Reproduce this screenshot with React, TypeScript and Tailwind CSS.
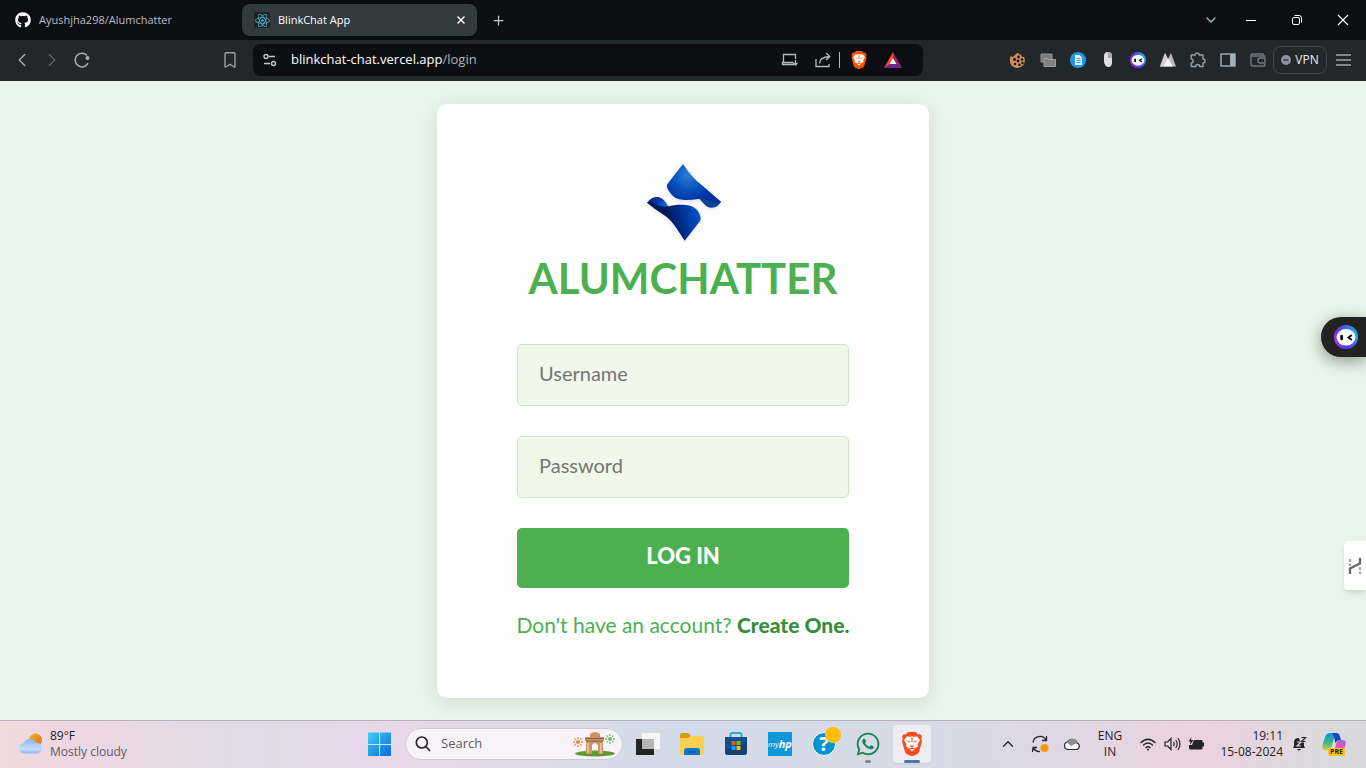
import type { ReactNode } from "react";
import { FaGithub, FaReact, FaWhatsapp } from "react-icons/fa";
import { ChevronDown, ChevronLeft, ChevronRight, ChevronUp, Plus, X } from "lucide-react";

function IconButton({ label, className = "w-[30px]", children }: { label: string; className?: string; children: ReactNode }) {
  return (
    <button type="button" aria-label={label} className={`flex h-8 shrink-0 items-center justify-center ${className}`}>
      {children}
    </button>
  );
}

function BraveLion({ size, color = "#fb4a20" }: { size: number; color?: string }) {
  return (
    <svg width={size} height={size} viewBox="0 0 24 24" aria-hidden="true">
      <path d="M8 0h8l2.200 2.400 2-.3L22 4.800l-.8 2.200.8 2.200-3 10.800q-.4 1.200-1.500 2L13 24q-1 .500-2 0l-4.500-2q-1.100-.8-1.500-2L2 9.200 2.800 7 2 4.800l1.800-2.700 2 .3z" fill={color} />
      <path d="M7 4.200l2.500.5 2.500-.3 2.500.3 2.500-.5 3 4-2.500 4 .6 2.300-3 1.700L12 19.500l-3.100-3.300-3-1.700.6-2.300L4 8.200z" fill="#fff" />
      <path d="M6.500 8.500l3.700.8-.7 1.500zM17.500 8.500l-3.700.8.7 1.500zM10 12.800l2 1.200 2-1.200-.6 2.200h-2.800zM11.300 5.500h1.400l-.3 5h-.8zM8.500 16.500l3.500-1 3.500 1-3.500.7z" fill={color} />
    </svg>
  );
}

function Robot({ size }: { size: number }) {
  return (
    <svg width={size} height={size} viewBox="0 0 24 24" aria-hidden="true">
      <defs>
        <linearGradient id="robotRing" x1="0" y1="0.800" x2="1" y2="0.400">
          <stop offset="0" stopColor="#c52df0" />
          <stop offset="0.350" stopColor="#5a35f5" />
          <stop offset="0.700" stopColor="#3f63ee" />
          <stop offset="1" stopColor="#19b4dd" />
        </linearGradient>
      </defs>
      <circle cx="12" cy="12" r="12" fill="url(#robotRing)" />
      <ellipse cx="12" cy="12.300" rx="9.500" ry="8.300" fill="#fff" />
      <rect x="6.200" y="9.700" width="2.800" height="5.600" rx="1.400" fill="#111" />
      <path d="M17.800 10l-3.300 2.500 3.300 2.500" stroke="#111" strokeWidth="2" fill="none" />
    </svg>
  );
}

function Logo() {
  return (
    <svg className="size-20 drop-shadow-sm" viewBox="-2 0 80 80" role="img" aria-label="Alumchatter logo">
      <defs>
        <radialGradient id="wingTop" gradientUnits="userSpaceOnUse" cx="43" cy="13" r="30">
          <stop offset="0" stopColor="#2f7ed8" />
          <stop offset="0.500" stopColor="#0a50bd" />
          <stop offset="1" stopColor="#002f9e" />
        </radialGradient>
        <linearGradient id="wingBottom" gradientUnits="userSpaceOnUse" x1="22" y1="58" x2="56" y2="50">
          <stop offset="0" stopColor="#001a55" />
          <stop offset="0.450" stopColor="#00308f" />
          <stop offset="1" stopColor="#0759d5" />
        </linearGradient>
        <linearGradient id="curl" x1="0" y1="0" x2="1" y2="0.600">
          <stop offset="0" stopColor="#001c66" />
          <stop offset="0.550" stopColor="#0638b0" />
          <stop offset="1" stopColor="#1673cf" />
        </linearGradient>
      </defs>
      <path d="M53 36C57 38 59 45 66 45.700C71 46 74 43 76 40L66 35Z" fill="#0c4595" />
      <path d="M38 2C44 11 50 18 56.700 23L76 39.700C74 41 72 42 69 41C63 38 59 36 53 37C44 38.500 33 39 28 34C24 30 21 25 22 22.500Z" fill="url(#wingTop)" />
      <path d="M2 40.700C5 37 8 35 12 35C18 35 21 41 24 45L15 47Z" fill="url(#curl)" />
      <path d="M2 40.700C4 39 7 39 9 41C14 45 19 45 25 44C34 42 46 42 51 47C55 51 57 57 55 59L39.700 78.700C34 70 29 62 25 58C20 53 14 50 10 47Z" fill="url(#wingBottom)" />
    </svg>
  );
}

function TabStrip() {
  return (
    <header className="flex h-10 items-center bg-[#0d0e13] text-[11px] text-white">
      <div className="flex w-[242px] shrink-0 items-center gap-2 pl-[15px] text-[#b9bcc1]">
        <FaGithub size={16} color="#fff" />
        <span>Ayushjha298/Alumchatter</span>
      </div>
      <div className="flex h-8 w-[235px] shrink-0 items-center gap-2 rounded-lg bg-[#313a3f] pl-3">
        <span className="flex size-4 items-center justify-center rounded-xs bg-[#20232a]">
          <FaReact size={15} color="#4fb8d4" />
        </span>
        <span className="flex-1">BlinkChat App</span>
        <IconButton label="Close tab" className="w-8"><X size={12} strokeWidth={3} /></IconButton>
      </div>
      <IconButton label="New tab" className="ml-1.5 w-[30px]"><Plus size={15} strokeWidth={2} color="#c5c9cc" /></IconButton>
      <div className="ml-auto flex">
        <IconButton label="Search tabs" className="w-[34px]"><ChevronDown size={16} color="#a6b8c0" /></IconButton>
        <IconButton label="Minimize" className="w-[46px]">
          <svg width="12" height="12"><path d="M1 6.500h10" stroke="#fff" /></svg>
        </IconButton>
        <IconButton label="Restore" className="w-[46px]">
          <svg width="12" height="12" fill="none" stroke="#fff"><rect x="1.500" y="3.500" width="7" height="7" rx="1.500" /><path d="M3.500 1.500h4.500a2.500 2.500 0 0 1 2.500 2.500v4.500" /></svg>
        </IconButton>
        <IconButton label="Close" className="w-[46px]">
          <svg width="12" height="12" stroke="#fff" strokeWidth="1.200"><path d="M1 1l10 10M11 1L1 11" /></svg>
        </IconButton>
      </div>
    </header>
  );
}

function Toolbar() {
  return (
    <nav aria-label="Browser toolbar" className="flex h-[41px] items-center bg-[#22272a] pb-px">
      <div className="flex w-[253px] shrink-0 pr-2 pl-[7px]">
        <IconButton label="Back"><ChevronLeft size={22} strokeWidth={1.500} color="#a2b2ba" /></IconButton>
        <IconButton label="Forward"><ChevronRight size={22} strokeWidth={1.500} color="#586166" /></IconButton>
        <IconButton label="Reload">
          <svg width="16" height="16" fill="none"><path d="M13 3.500A6.800 6.800 0 1 0 14 11.200" stroke="#a2b2ba" strokeWidth="1.500" /><circle cx="13.500" cy="6" r="2" fill="#a2b2ba" /></svg>
        </IconButton>
        <IconButton label="Bookmark this page" className="ml-auto w-[30px]">
          <svg width="12" height="16" fill="none"><path d="M1 2q0-1.300 1.300-1.300h7.400Q11 .700 11 2v12.800q0 .500-.600.200L6 12.300 1.600 15q-.600.300-.600-.200z" stroke="#96a2a9" strokeWidth="1.400" /></svg>
        </IconButton>
      </div>
      <div className="flex h-8 min-w-0 flex-1 items-center rounded-lg bg-[#0d0e13] pr-[15px] pl-2.5">
        <svg width="14" height="14" fill="none" stroke="#c5cbd0" strokeWidth="1.400" aria-hidden="true">
          <circle cx="3" cy="3.500" r="2" /><path d="M6 3.500h6M1 10.500h6" /><circle cx="10.500" cy="10.500" r="2" />
        </svg>
        <div role="textbox" tabIndex={0} aria-label="Address" className="ml-3.5 flex-1 text-[13px] text-white">
          blinkchat-chat.vercel.app<span className="text-[#b2b5b8]">/login</span>
        </div>
        <IconButton label="Install app" className="w-[34px]">
          <svg width="18" height="14" fill="none" stroke="#b2babf" strokeWidth="1.300"><path d="M13 11.500H1.500v-2h11M2.500 9V1.500h12V6M14.500 7v5M12.500 10l2 2 2-2" /></svg>
        </IconButton>
        <IconButton label="Share" className="w-8">
          <svg width="16" height="16" fill="none" stroke="#b2babf" strokeWidth="1.300"><path d="M1 7v7.500h13V12M4.500 11.500C4.500 7 8 5 14.500 4.500M11 1l3.800 3.500L11 8" /></svg>
        </IconButton>
        <span className="h-4 w-px bg-[#b2babf]" />
        <IconButton label="Brave Shields" className="w-[38px]"><BraveLion size={18} color="#ff5000" /></IconButton>
        <IconButton label="Brave Rewards">
          <svg width="18" height="16" viewBox="0 0 18 16"><path d="M9 0L0 16l9-5z" fill="#ff4724" /><path d="M9 0l9 16-9-5z" fill="#9e1f63" /><path d="M0 16h18l-9-6z" fill="#662d91" /><path d="M9 6l3.500 6h-7z" fill="#fff" /></svg>
        </IconButton>
      </div>
      <div className="flex shrink-0 items-center pr-[7px] pl-20">
        <IconButton label="Cookie editor">
          <svg width="16" height="16"><path d="M8 0a2.500 2.500 0 0 0 3 2.500 2.500 2.500 0 0 0 3 2.500A7.600 7.600 0 1 1 1 4l2 1 2-2z" fill="#d18c60" /><g fill="#1c1512"><circle cx="8.500" cy="5" r="1.400" /><circle cx="4.500" cy="7.500" r="1.400" /><circle cx="8" cy="9" r="1.400" /><circle cx="12" cy="7.500" r="1.300" /><circle cx="5" cy="12" r="1.300" /><circle cx="9.500" cy="12.800" r="1.300" /><circle cx="12.500" cy="11" r="1.200" /></g></svg>
        </IconButton>
        <IconButton label="Windows extension">
          <svg width="16" height="14"><path d="M1 1h11v8H1z" fill="#7c7c7c" stroke="#929292" /><path d="M4 5.500h4v1h7.500v7H4z" fill="#808080" stroke="#a0a0a0" /></svg>
        </IconButton>
        <IconButton label="Reader">
          <svg width="16" height="16"><circle cx="8" cy="8" r="8" fill="#2196e3" /><path d="M5 3h4.500L12 5.500V13H5z" fill="#e8f5ff" /><path d="M6.500 6.500h4M6.500 8.500h4M6.500 10.500h4" stroke="#2196e3" /></svg>
        </IconButton>
        <IconButton label="Mouse extension">
          <svg width="10" height="16"><path d="M1 4q0-4 4-4t4 4v6q0 5-3.500 5T1 10z" fill="#dedede" /><path d="M5 0q4 0 4 4v2H5z" fill="#a4a7b8" /></svg>
        </IconButton>
        <IconButton label="Assistant"><Robot size={16} /></IconButton>
        <IconButton label="Mountains extension">
          <svg width="16" height="14"><path d="M0 13.500L5 0l3 6 3-6 5 13.500z" fill="#b9b9b9" /><path d="M3 13.500L8 5l5 8.500z" fill="#f4f4f4" /><path d="M5 0l2.500 5L3 13.500H0z" fill="#cfcfcf" /></svg>
        </IconButton>
        <IconButton label="Extensions">
          <svg width="16" height="16" fill="none" stroke="#8fa2ac" strokeWidth="1.400"><path d="M1.200 3h4a2 2 0 1 1 4 0H13v4a2 2 0 1 1 0 4v3.500H9.700a2 2 0 0 0-4 0H1.200V11a2 2 0 0 0 0-4z" strokeLinejoin="round" /></svg>
        </IconButton>
        <IconButton label="Sidebar">
          <svg width="16" height="14"><rect x="1" y="1" width="14" height="12" fill="none" stroke="#9fb0b9" strokeWidth="1.400" /><path d="M10 1h5v12h-5z" fill="#9fb0b9" /></svg>
        </IconButton>
        <IconButton label="Wallet">
          <svg width="16" height="14" fill="none" stroke="#6d7a81" strokeWidth="1.400"><path d="M14.500 4V3H2.500q-1.500 0-1.500-1T2.500 1H13v2M1 2v9q0 2 2 2h11.500v-2M15 5h-4.500a2.500 2.500 0 0 0 0 5H15z" /></svg>
        </IconButton>
        <button type="button" className="flex h-7 w-[54px] shrink-0 items-center justify-center gap-1 rounded-lg border border-[#3e484d] text-xs text-[#eceeef]">
          <svg width="10" height="10" aria-hidden="true"><circle cx="5" cy="5" r="5" fill="#8e90a8" /><path d="M2.500 5h5" stroke="#2a2f35" strokeWidth="1.400" /></svg>
          VPN
        </button>
        <IconButton label="Menu" className="w-8">
          <svg width="15" height="12" stroke="#98a8b0" strokeWidth="1.300"><path d="M0 1h15M0 6h15M0 11h15" /></svg>
        </IconButton>
      </div>
    </nav>
  );
}

function LoginPage() {
  const field =
    "h-[62px] w-full rounded-[5px] border border-[#c8e6c9] bg-[#f1f8e9] px-[21px] pb-1 text-xl text-[#333] placeholder:text-[#757575] focus:outline-none";
  return (
    <main className="relative flex flex-1 items-center justify-center overflow-hidden bg-[#e8f5e9] font-[Lato,sans-serif]">
      <form className="flex w-[492px] flex-col items-center rounded-[10px] bg-white px-20 pt-[58px] pb-14 shadow-[0_4px_20px_rgba(0,0,0,0.1)]">
        <Logo />
        <h1 className="mt-2 text-[42px] leading-[56px] font-bold text-[#4caf50]">ALUMCHATTER</h1>
        <div className="mt-[38px] flex w-full flex-col gap-[30px]">
          <input aria-label="Username" type="text" placeholder="Username" className={field} />
          <input aria-label="Password" type="password" placeholder="Password" className={field} />
          <button type="button" className="h-[60px] rounded-[5px] bg-[#4caf50] pb-1 text-[22px] font-black text-white">LOG IN</button>
        </div>
        <p className="mt-[22px] mb-0.5 text-[21px] leading-[30px] whitespace-nowrap text-[#4caf50]">
          Don't have an account? <a href="#register" className="font-black text-[#388e3c]">Create One.</a>
        </p>
      </form>
      <button type="button" aria-label="Open assistant" className="absolute top-[236px] right-0 flex h-10 w-[45px] items-center rounded-l-full bg-[#222] pl-[13px] shadow-[0_4px_16px_rgba(0,0,0,0.4)]">
        <Robot size={24} />
      </button>
      <button type="button" aria-label="Open helper" className="absolute top-[460px] right-0 flex h-[49px] w-[22px] items-center justify-center rounded-l-sm bg-white shadow-md">
        <svg width="14" height="18" fill="none"><path d="M2 17v-5.500l10-5V1" stroke="#6c6c6c" strokeWidth="2.400" /><path d="M2 2v7M12 10v7" stroke="#a8a8a8" strokeWidth="2.400" strokeDasharray="3 1.500" /></svg>
      </button>
    </main>
  );
}

function TaskButton({ label, children }: { label: string; children: ReactNode }) {
  return <button type="button" aria-label={label} className="flex h-[46px] w-11 shrink-0 items-center justify-center">{children}</button>;
}

function GateArt() {
  const rays = [0, 45, 90, 135, 180, 225, 270, 315];
  return (
    <svg width="44" height="26" viewBox="0 0 44 26" aria-hidden="true">
      <g strokeWidth="1.400" strokeDasharray="2 1">
        {rays.map((r) => <path key={r} d="M6 11V5" stroke="#ee8b4a" transform={`rotate(${r} 6 11)`} />)}
        {rays.map((r) => <path key={r} d="M38 8V2" stroke="#79c267" transform={`rotate(${r} 38 8)`} />)}
      </g>
      <ellipse cx="23" cy="22.500" rx="20" ry="3" fill="#5c9a35" />
      <path d="M18 3q5-4 10 0v3h4v4h-1v13h-5v-9q-3-4-6 0v9h-6V10h-1V6h5z" fill="#c99466" />
      <path d="M13 7.500h19M14 10h17" stroke="#8e603f" />
      <path d="M16 12v10M29 12v10" stroke="#e7be94" strokeWidth="2" />
    </svg>
  );
}

function Taskbar() {
  return (
    <footer className="flex h-12 items-center border-t border-[#b9b1bd] bg-[linear-gradient(90deg,#f0dadd_0%,#ecd8e4_8%,#e1dae8_18%,#e9d8e9_30%,#d4dbe8_47%,#d5dae7_62%,#dcd8e8_75%,#ecd2de_88%,#dbdadd_97%,#d9d9dc_100%)] pb-px text-xs text-[#1f1d22]">
      <div className="flex flex-1 items-center gap-1.5 pl-[18px]">
        <svg width="26" height="24" viewBox="1 0 26 24" aria-hidden="true">
          <defs>
            <linearGradient id="sun" x1="0" y1="0" x2="1" y2="1"><stop stopColor="#f7b52c" /><stop offset="1" stopColor="#ee6514" /></linearGradient>
            <linearGradient id="cloud" x1="0" y1="0" x2="0" y2="1"><stop stopColor="#8bb7f2" /><stop offset="0.700" stopColor="#c6dcfa" /><stop offset="1" stopColor="#92b4ea" /></linearGradient>
          </defs>
          <circle cx="18.500" cy="8" r="6.500" fill="url(#sun)" />
          <path d="M7 21.500a5.200 5.200 0 0 1-.500-10.300A7 7 0 0 1 19 10.500a5.600 5.600 0 0 1 1.500 11z" fill="url(#cloud)" />
        </svg>
        <div className="text-xs leading-4">
          <div>89°F</div>
          <div className="text-[#605a64]">Mostly cloudy</div>
        </div>
      </div>
      <div className="flex shrink-0 items-center">
        <TaskButton label="Start">
          <svg width="24" height="24"><defs><linearGradient id="win" x1="0" y1="0" x2="1" y2="1"><stop stopColor="#43ccfb" /><stop offset="1" stopColor="#006dd1" /></linearGradient></defs><path d="M1.500 0.500H12V12H1V1zM13 .500h10.500l.500.500v11H13zM1 13h11v11H1.500l-.500-.500zM13 13h11v10.500l-.500.500H13z" fill="url(#win)" /></svg>
        </TaskButton>
        <div className="ml-1 flex h-8 w-[218px] items-center rounded-full border border-[#d0c8d5] bg-[#f7f3f9] pr-1.5 pl-[9px]">
          <svg width="16" height="16" fill="none" stroke="#28262b" strokeWidth="1.700" aria-hidden="true"><circle cx="6.800" cy="6.500" r="5.500" /><path d="M10.800 10.500L15 15" /></svg>
          <input aria-label="Search" placeholder="Search" className="ml-2.5 w-0 flex-1 bg-transparent text-[13px] placeholder:text-[#5f5a63] focus:outline-none" />
          <GateArt />
        </div>
        <div className="ml-[3px] flex">
          <TaskButton label="Task view">
            <svg width="24" height="22"><path d="M0 6h18v16H0z" fill="#242424" /><path d="M6 0h17q1 0 1 1v15H6z" fill="#f5f5f5" /><path d="M6 6h12v10H6z" fill="#b5b5b5" /></svg>
          </TaskButton>
          <TaskButton label="File Explorer">
            <svg width="24" height="22"><path d="M0 2q0-2 2-2h6l3 3h11q2 0 2 2v6H0z" fill="#d69b10" /><path d="M0 5h8l3-2h11q2 0 2 2v15q0 2-2 2H2q-2 0-2-2z" fill="#fdd052" /><path d="M4 22v-4q0-3 3-3h10q3 0 3 3v4z" fill="#1476cb" /><path d="M8 19h8" stroke="#075597" strokeWidth="1.500" /></svg>
          </TaskButton>
          <TaskButton label="Microsoft Store">
            <svg width="24" height="24"><path d="M6.500 6V2.500q0-1.500 1.500-1.500h8q1.500 0 1.500 1.500V6" fill="none" stroke="#29a9e4" strokeWidth="2" /><path d="M1 5h22v15q0 3-3 3H4q-3 0-3-3z" fill="#12508d" /><path d="M1 17q12 0 22-7v10q0 3-3 3H4q-3 0-3-3z" fill="#183767" opacity=".6" /><path d="M7.500 9H11.500v4h-4z" fill="#f25022" /><path d="M12.500 9h4v4h-4z" fill="#7fba00" /><path d="M7.500 14h4v4h-4z" fill="#00a4ef" /><path d="M12.500 14h4v4h-4z" fill="#ffb900" /></svg>
          </TaskButton>
          <TaskButton label="myHP">
            <span className="flex size-6 items-center justify-center bg-[#0d96d8] text-[8px] text-white italic">my<b className="text-[11px]">hp</b></span>
          </TaskButton>
          <TaskButton label="Help">
            <span className="relative flex size-6 items-center justify-center rounded-full border border-white bg-[#0793d2] text-xl font-bold text-white">
              ?<span className="absolute -top-1.5 -right-1.5 size-4 rounded-full bg-[#ffbe0b]" />
            </span>
          </TaskButton>
          <TaskButton label="WhatsApp">
            <span className="relative flex">
              <FaWhatsapp size={26} color="#168653" />
              <span className="absolute -bottom-1.5 left-2.5 h-[3px] w-1.5 rounded-full bg-[#85858c]" />
            </span>
          </TaskButton>
          <TaskButton label="Brave">
            <span className="relative flex h-[38px] w-[38px] items-center justify-center rounded-sm bg-[#eeedf3] shadow-xs">
              <BraveLion size={24} />
              <span className="absolute bottom-0 left-[11px] h-[3px] w-4 rounded-full bg-[#4a77a5]" />
            </span>
          </TaskButton>
        </div>
      </div>
      <div className="flex w-[432px] shrink-0 items-center justify-end pr-[13px]">
        <IconButton label="Hidden icons" className="w-8"><ChevronUp size={18} strokeWidth={1.700} /></IconButton>
        <IconButton label="Windows Update" className="w-8">
          <svg width="18" height="18" fill="none" stroke="#252329" strokeWidth="1.300"><path d="M2 7.500A7 7 0 0 1 15 5M15.500 1v4.500H11M2 13l-.500 4M1.500 12.500H6M2 13q3 4 7 3.500" /><circle cx="13.500" cy="13" r="4" fill="#ff9800" stroke="none" /></svg>
        </IconButton>
        <IconButton label="OneDrive" className="w-8">
          <svg width="18" height="14"><path d="M5 12.500a3.800 3.800 0 0 1-.500-7.500A5.200 5.200 0 0 1 14 6a3.400 3.400 0 0 1-.200 6.500z" fill="#fafafa" stroke="#2b292e" strokeWidth="1.200" /><path d="M4 5.500A5.200 5.200 0 0 1 14 6l-6 3z" fill="#8f8f92" /></svg>
        </IconButton>
        <button type="button" className="w-11 text-center text-xs leading-4">ENG<br />IN</button>
        <div className="flex px-1">
          <IconButton label="Wi-Fi" className="w-6">
            <svg width="16" height="13" fill="none" stroke="#252329" strokeWidth="1.200"><path d="M.500 5q7.500-7.500 15 0M3 7.500q5-5 10 0M5.500 10q2.500-2.500 5 0" /><circle cx="8" cy="11.500" r="1" fill="#252329" stroke="none" /></svg>
          </IconButton>
          <IconButton label="Volume" className="w-6">
            <svg width="17" height="14" fill="none" stroke="#252329" strokeWidth="1.200"><path d="M1 5h2.500L7 1.500v11L3.500 9H1zM9.500 5q1.500 2 0 4M11.700 3q3 4 0 8M13.800 1q4.500 6 0 12" /></svg>
          </IconButton>
          <IconButton label="Battery" className="w-6">
            <svg width="17" height="14"><path d="M6 3h7.500q1 0 1 1v1.500H16v4h-1.500V11q0 1.500-1.500 1.500H2.500Q1 12.500 1 11V8h3z" fill="#252329" /><path d="M3.500 0L.500 4.500h2L2 8l3.500-5H3z" fill="#252329" /></svg>
          </IconButton>
        </div>
        <div className="w-[71px] text-right text-xs leading-4 whitespace-nowrap"><div>19:11</div><div className="flex justify-end">15-08-2024</div></div>
        <IconButton label="Notifications" className="w-8">
          <svg width="15" height="16"><path d="M2 6q0-4 5-4 .500 3 2.500 4.500H12V10l1 2H1l1-2zM5 13h4q-2 3-4 0z" fill="#252329" /><path d="M5 6h4l-4 4h4" stroke="#e0d9df" strokeWidth="1.200" fill="none" /><path d="M9.500 1.500h4l-4 4h4" stroke="#252329" strokeWidth="1.200" fill="none" /></svg>
        </IconButton>
        <IconButton label="Copilot preview" className="w-[38px]">
          <span className="relative flex">
            <svg width="24" height="24" viewBox="0 0 24 24">
              <defs>
                <linearGradient id="copilotLeft" x1="0" y1="0" x2="0" y2="1"><stop stopColor="#1391e6" /><stop offset="0.550" stopColor="#39b98d" /><stop offset="1" stopColor="#e5d329" /></linearGradient>
                <linearGradient id="copilotRight" x1="0" y1="0" x2="0" y2="1"><stop stopColor="#ae62ea" /><stop offset="0.600" stopColor="#f0579b" /><stop offset="1" stopColor="#f78b4f" /></linearGradient>
              </defs>
              <path d="M9 1h7q-2.500.500-3.500 4L9.500 15q-1 3.500-4 3.500H4Q-.500 18 .500 13L3 5q1-4 6-4z" fill="url(#copilotLeft)" />
              <path d="M17 8h4q3.500 0 2.600 4l-2 7q-1 3.500-4.600 3.500H9q2.500-1 3.500-4.500l2-7.500Q15.200 8 17 8z" fill="url(#copilotRight)" />
              <path d="M10 1h4.500q2.500 0 3.300 3L19 8h-2q-2.500 0-3.500 3.500L12.800 8Q12 4.500 10 1z" fill="#1648bd" />
            </svg>
            <span className="absolute top-[16px] left-1.5 rounded-xs bg-[#fcc419] px-0.5 text-[7px] leading-[8px] font-bold text-[#2b2100]">PRE</span>
          </span>
        </IconButton>
      </div>
    </footer>
  );
}

export default function App() {
  return (
    <div className="flex min-h-screen flex-col font-['Open_Sans',sans-serif]">
      <TabStrip />
      <Toolbar />
      <LoginPage />
      <Taskbar />
    </div>
  );
}
